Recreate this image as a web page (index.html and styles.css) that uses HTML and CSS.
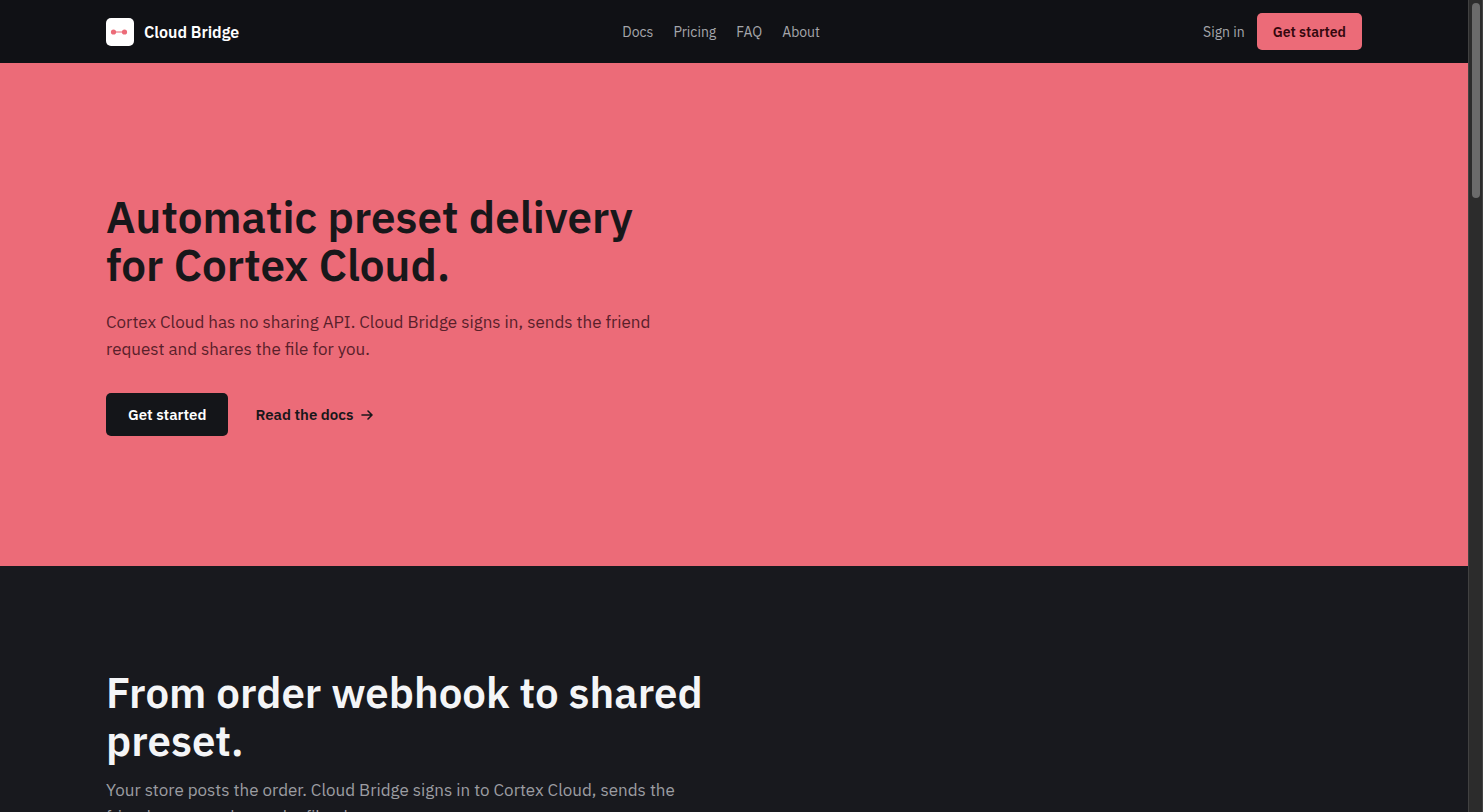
FILE: index.html
```html
<!DOCTYPE html>
<html lang="en">
<head>
    <meta charset="UTF-8">
    <meta name="viewport" content="width=device-width, initial-scale=1.0">
    <title>Cloud Bridge</title>
    <link rel="stylesheet" href="styles.css">
</head>
<body>
    <div class="page">
        <header class="header">
            <div class="container header-inner">
                <a href="#" class="brand">
                    <svg class="logo" viewBox="0 0 28 28" aria-hidden="true">
                        <rect width="28" height="28" rx="5" fill="#fff"/>
                        <path d="M8 14h10" stroke="#ec6b78" stroke-opacity="0.7" stroke-width="1.5"/>
                        <circle cx="7.5" cy="14" r="2.6" fill="#ec6b78"/>
                        <circle cx="18.5" cy="14" r="2.6" fill="#ec6b78"/>
                    </svg>
                    <span>Cloud Bridge</span>
                </a>
                <nav class="nav">
                    <a href="#docs">Docs</a>
                    <a href="#pricing">Pricing</a>
                    <a href="#faq">FAQ</a>
                    <a href="#about">About</a>
                </nav>
                <div class="account">
                    <a href="#signin">Sign in</a>
                    <button type="button" class="btn btn-small">Get started</button>
                </div>
            </div>
        </header>
        <main>
            <section class="hero">
                <div class="container">
                    <h1>Automatic preset delivery<br>for Cortex Cloud.</h1>
                    <p class="lead">Cortex Cloud has no sharing API. Cloud Bridge signs in, sends the friend request and shares the file for you.</p>
                    <div class="actions">
                        <button type="button" class="btn btn-dark">Get started</button>
                        <a href="#docs" class="docs-link">
                            Read the docs
                            <svg viewBox="0 0 12 12" aria-hidden="true">
                                <path d="M1 6h10M7 2l4 4-4 4" fill="none" stroke="currentColor" stroke-width="1.6" stroke-linecap="round" stroke-linejoin="round"/>
                            </svg>
                        </a>
                    </div>
                </div>
            </section>
            <section class="steps">
                <div class="container">
                    <h2>From order webhook to shared preset.</h2>
                    <p class="lead">Your store posts the order. Cloud Bridge signs in to Cortex Cloud, sends the friend request, shares the file, then moves on.</p>
                </div>
            </section>
        </main>
    </div>
    <div class="scrollbar" aria-hidden="true">
        <div class="thumb"></div>
    </div>
</body>
</html>
```
FILE: styles.css
```css
* {
    box-sizing: border-box;
}

body {
    margin: 0;
    display: flex;
    height: 100vh;
    background-color: #18191e;
    color: #f4f5f7;
    font-family: "IBM Plex Sans", Roboto, "Noto Sans", sans-serif;
}

a {
    color: inherit;
    text-decoration: none;
}

h1, h2, p {
    margin: 0;
}

.page {
    flex: 1;
    min-width: 0;
    overflow-y: auto;
    scrollbar-width: none;
}

.container {
    max-width: 1304px;
    margin: 0 auto;
    padding: 0 24px;
}

/* Header */
.header {
    background-color: #101115;
}

.header-inner {
    display: flex;
    align-items: center;
    justify-content: space-between;
    height: 63px;
}

.brand {
    display: flex;
    align-items: center;
    gap: 10px;
    font-size: 16px;
    line-height: 20px;
    font-weight: 600;
    color: #fff;
}

.logo {
    width: 28px;
    height: 28px;
}

.nav {
    display: flex;
    gap: 20px;
}

.nav, .account {
    font-size: 14px;
    line-height: 20px;
    color: #a5a6ab;
}

.account {
    display: flex;
    align-items: center;
    gap: 12px;
}

/* Buttons */
.btn {
    border: none;
    border-radius: 5px;
    font-family: inherit;
    font-weight: 600;
    cursor: pointer;
}

.btn-small {
    height: 37px;
    padding: 0 16px;
    font-size: 14px;
    background-color: #ec6b78;
    color: #35080e;
}

.btn-dark {
    height: 43px;
    padding: 0 22px;
    font-size: 15px;
    background-color: #141519;
    color: #fff;
}

/* Hero */
.hero {
    padding: 130px 0;
    background-color: #ec6b78;
    color: #18171a;
}

h1 {
    font-size: 44px;
    line-height: 48px;
    font-weight: 600;
}

.lead {
    max-width: 580px;
    font-size: 17px;
    line-height: 27px;
}

.hero .lead {
    margin: 20px 0 30px;
    color: #59202a;
}

.actions {
    display: flex;
    align-items: center;
    gap: 27px;
}

.docs-link {
    display: flex;
    align-items: center;
    gap: 8px;
    font-size: 15px;
    font-weight: 600;
}

.docs-link svg {
    width: 12px;
    height: 12px;
}

/* Steps */
.steps {
    padding: 103px 0;
}

h2 {
    max-width: 640px;
    font-size: 42px;
    line-height: 48px;
    font-weight: 600;
}

.steps .lead {
    margin-top: 12px;
    color: #9c9da2;
}

/* Scrollbar */
.scrollbar {
    width: 15px;
    padding: 3px;
    background-color: #2c2c2c;
    border-left: 1px solid #414141;
    border-right: 1px solid #414141;
}

.thumb {
    width: 8px;
    height: 195px;
    border-radius: 4px;
    background-color: #6b6b6b;
}
```
